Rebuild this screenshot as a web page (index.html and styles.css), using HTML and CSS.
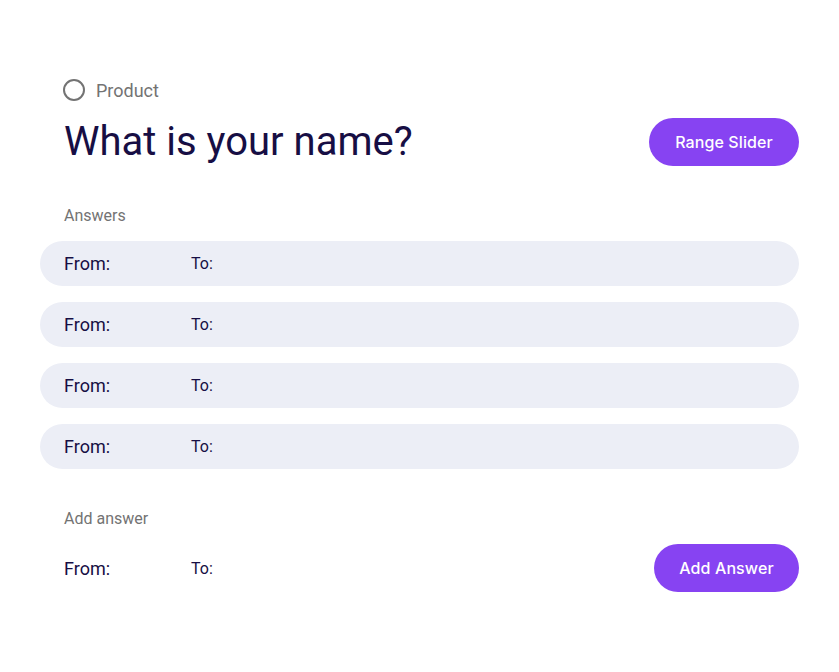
FILE: index.html
```html
<!DOCTYPE html>
<html>
<head>
<meta charset="utf-8">
<link rel="stylesheet" href="styles.css">
</head>
<body>
<div class="page">
  <div class="type">
    <span class="radio"></span>
    <span class="type-label">Product</span>
  </div>
  <div class="header">
    <h1 class="title">What is your name?</h1>
    <button class="btn">Range Slider</button>
  </div>
  <div class="section-label">Answers</div>
  <div class="answers">
    <div class="answer"><span class="from">From:</span><span class="to">To:</span></div>
    <div class="answer"><span class="from">From:</span><span class="to">To:</span></div>
    <div class="answer"><span class="from">From:</span><span class="to">To:</span></div>
    <div class="answer"><span class="from">From:</span><span class="to">To:</span></div>
  </div>
  <div class="section-label add-label">Add answer</div>
  <div class="add-row">
    <span class="from">From:</span><span class="to">To:</span>
    <button class="btn btn-add">Add Answer</button>
  </div>
</div>
</body>
</html>
```
FILE: styles.css
```css
html, body {
  margin: 0;
  padding: 0;
  background: #ffffff;
}
body {
  font-family: Roboto, "Liberation Sans", sans-serif;
}
.page {
  padding: 80px 40px 0 64px;
}
.type {
  display: flex;
  align-items: center;
  height: 20px;
}
.radio {
  border: 2px solid #737373;
  border-radius: 50%;
  box-sizing: border-box;
  width: 22px;
  height: 22px;
  margin-left: -1px;
}
.type-label {
  margin-left: 11px;
  font-size: 18px;
  color: #737373;
}
.header {
  margin-top: 18px;
  display: flex;
  align-items: center;
  justify-content: space-between;
  height: 48px;
}
.title {
  margin: 0;
  font-size: 40px;
  font-weight: 400;
  color: #170e44;
  line-height: 48px;
}
.btn {
  height: 48px;
  width: 150px;
  border: none;
  border-radius: 24px;
  background: #8743f2;
  color: #ffffff;
  font-family: Inter, "Open Sans", sans-serif;
  font-size: 16px;
  font-weight: 500;
  letter-spacing: 0.1px;
  padding: 0;
}
.section-label {
  margin-top: 41px;
  font-size: 16px;
  line-height: 18px;
  color: #737373;
}
.answers {
  margin-top: 16px;
  margin-left: -24px;
  display: flex;
  flex-direction: column;
  gap: 16px;
}
.answer {
  height: 45px;
  background: #eceef6;
  border-radius: 23px;
  display: flex;
  align-items: center;
  padding-left: 24px;
}
.from {
  width: 127px;
  font-size: 18px;
  color: #170e44;
}
.to {
  font-size: 16px;
  color: #170e44;
}
.add-label {
  margin-top: 41px;
}
.add-row {
  margin-top: 16px;
  display: flex;
  align-items: center;
  height: 48px;
}
.btn-add {
  margin-left: auto;
  width: 145px;
}
```
